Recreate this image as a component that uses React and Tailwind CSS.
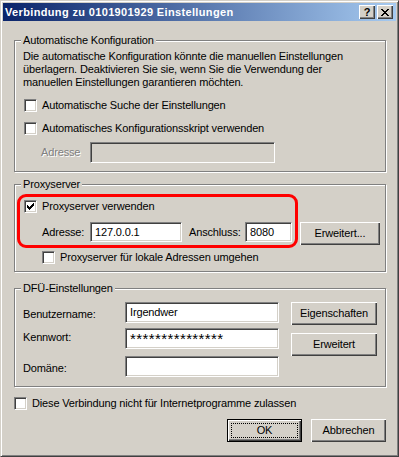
import React from "react";

const sunken =
  "border border-t-[#808080] border-l-[#808080] border-r-white border-b-white shadow-[inset_1px_1px_#404040,inset_-1px_-1px_#d4d0c8]";
const raised = "shadow-[inset_1px_1px_#fff,inset_-1px_-1px_#404040,inset_-2px_-2px_#808080]";

function Check({ checked }) {
  const cols = [2, 3, 4, 3, 2, 1, 0];
  return (
    <span className={`flex h-[13px] w-[13px] shrink-0 items-center justify-center bg-white ${sunken}`}>
      {checked && (
        <svg width="7" height="7" viewBox="0 0 7 7" shapeRendering="crispEdges">
          {cols.map((y, x) => (
            <rect key={x} x={x} y={y} width="1" height="3" fill="#000" />
          ))}
        </svg>
      )}
    </span>
  );
}

function CheckRow({ checked, children, className = "" }) {
  return (
    <div className={`flex h-[13px] items-center gap-[5px] ${className}`}>
      <Check checked={checked} />
      <span className="whitespace-nowrap">{children}</span>
    </div>
  );
}

function Btn({ children, className = "", def }) {
  return (
    <div
      className={`relative flex items-center justify-center bg-[#d4d0c8] ${
        def ? "border border-black " : ""
      }${raised} ${className}`}
    >
      {def && <span className="pointer-events-none absolute inset-[3px] border border-dotted border-black" />}
      {children}
    </div>
  );
}

function Field({ value, className = "", disabled }) {
  return (
    <div className={`flex items-center pl-[4px] ${disabled ? "bg-[#d4d0c8]" : "bg-white"} ${sunken} ${className}`}>
      {value}
    </div>
  );
}

function Group({ title, className = "", children }) {
  return (
    <div className={`relative w-[372px] ml-[11px] border border-[#808080] shadow-[inset_1px_1px_#fff,1px_1px_#fff] ${className}`}>
      <span className="absolute left-[6px] top-[-7px] bg-[#d4d0c8] px-[2px] leading-[13px]">{title}</span>
      {children}
    </div>
  );
}

export default function App() {
  return (
    <div className="w-[399px] h-[457px] bg-[#d4d0c8] border border-t-[#d4d0c8] border-l-[#d4d0c8] border-r-[#404040] border-b-[#404040] shadow-[inset_1px_1px_#fff,inset_-1px_-1px_#808080] p-[2px] font-['Liberation_Sans',Arial,sans-serif] text-[11px] leading-[13px] tracking-[-0.15px] text-black">
      <div className="flex h-[18px] items-center bg-[linear-gradient(to_right,#0a246a,#a6caf0)] pl-[2px] pr-[3px]">
        <span className="flex-1 font-bold tracking-[0.35px] text-white whitespace-nowrap">
          Verbindung zu 0101901929 Einstellungen
        </span>
        <Btn className="w-[16px] h-[14px] font-bold text-[11px] leading-none">?</Btn>
        <Btn className="ml-[2px] w-[16px] h-[14px]">
          <svg width="8" height="7" viewBox="0 0 8 7" shapeRendering="crispEdges">
            <path d="M0 0h2v1H0z M6 0h2v1H6z M1 1h2v1H1z M5 1h2v1H5z M2 2h4v1H2z M3 3h2v1H3z M2 4h4v1H2z M1 5h2v1H1z M5 5h2v1H5z M0 6h2v1H0z M6 6h2v1H6z" fill="#000" />
          </svg>
        </Btn>
      </div>

      <div className="flex flex-col">
        <Group title="Automatische Konfiguration" className="mt-[19px] pt-[9px] pb-[8px] pl-[8px]">
          <p className="whitespace-nowrap">
            Die automatische Konfiguration könnte die manuellen Einstellungen
            <br />
            überlagern. Deaktivieren Sie sie, wenn Sie die Verwendung der
            <br />
            manuellen Einstellungen garantieren möchten.
          </p>
          <CheckRow className="mt-[10px] ml-[1px]">Automatische Suche der Einstellungen</CheckRow>
          <CheckRow className="mt-[10px] ml-[1px]">Automatisches Konfigurationsskript verwenden</CheckRow>
          <div className="mt-[7px] flex items-center">
            <span className="ml-[18px] w-[49px] text-[#808080] [text-shadow:1px_1px_#fff]">Adresse</span>
            <Field disabled className="w-[185px] h-[21px]" />
          </div>
        </Group>

        <Group title="Proxyserver" className="mt-[12px] pt-[15px] pb-[7px] pl-[9px]">
          <span className="pointer-events-none absolute left-[2px] top-[9px] w-[281px] h-[54px] rounded-[9px] border-[3px] border-[#ff0000]" />
          <CheckRow checked>Proxyserver verwenden</CheckRow>
          <div className="mt-[9px] flex items-start">
            <span className="ml-[18px] flex h-[20px] w-[48px] items-center">Adresse:</span>
            <Field value="127.0.0.1" className="w-[92px] h-[20px]" />
            <span className="ml-[7px] flex h-[20px] w-[56px] items-center">Anschluss:</span>
            <Field value="8080" className="w-[47px] h-[20px]" />
            <Btn className="ml-[8px] w-[80px] h-[23px]">Erweitert...</Btn>
          </div>
          <CheckRow className="mt-[6px] ml-[18px]">Proxyserver für lokale Adressen umgehen</CheckRow>
        </Group>

        <Group title="DFÜ-Einstellungen" className="mt-[16px] pt-[13px] pb-[9px] pl-[8px] flex">
          <div className="flex flex-col">
            <div className="flex items-start">
              <span className="w-[102px] pt-[6px]">Benutzername:</span>
              <Field value="Irgendwer" className="w-[154px] h-[21px]" />
            </div>
            <div className="mt-[5px] flex items-start">
              <span className="w-[102px] pt-[3px]">Kennwort:</span>
              <Field value="***************" className="w-[154px] h-[21px] text-[15px] tracking-[0.4px]" />
            </div>
            <div className="mt-[7px] flex items-start">
              <span className="w-[102px] pt-[6px]">Domäne:</span>
              <Field className="w-[154px] h-[21px]" />
            </div>
          </div>
          <div className="ml-[12px] flex flex-col">
            <Btn className="w-[86px] h-[23px]">Eigenschaften</Btn>
            <Btn className="mt-[8px] w-[86px] h-[23px]">Erweitert</Btn>
          </div>
        </Group>

        <CheckRow className="mt-[10px] ml-[11px]">Diese Verbindung nicht für Internetprogramme zulassen</CheckRow>

        <div className="mt-[9px] flex justify-end gap-[9px] pr-[10px]">
          <Btn def className="w-[75px] h-[23px]">OK</Btn>
          <Btn className="w-[75px] h-[23px]">Abbrechen</Btn>
        </div>
      </div>
    </div>
  );
}
